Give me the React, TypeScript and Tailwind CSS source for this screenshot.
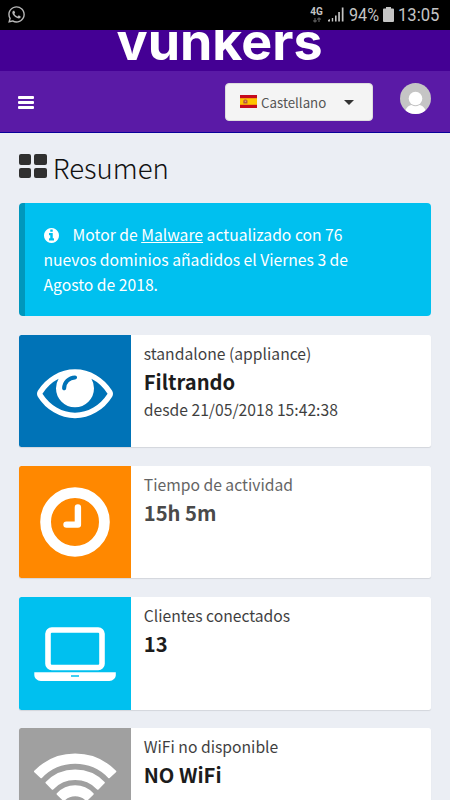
import type { ReactNode } from "react";
import { FaWhatsapp } from "react-icons/fa";
import { clsx } from "clsx";

interface InfoBox {
  label: string;
  value: string;
  detail?: string;
  color: string;
  muted?: boolean;
  icon: ReactNode;
}

function EyeIcon() {
  return (
    <svg viewBox="0 0 1792 1792" className="h-[76px] w-[76px]" fill="currentColor">
      <path d="M1664 960q-152-236-381-353 61 104 61 225 0 185-131.500 316.500t-316.500 131.500-316.500-131.500-131.500-316.500q0-121 61-225-229 117-381 353 133 205 333.500 326.500t434.500 121.500 434.500-121.500 333.500-326.500zm-720-384q0-20-14-34t-34-14q-125 0-214.500 89.500t-89.500 214.500q0 20 14 34t34 14 34-14 14-34q0-86 61-147t147-61q20 0 34-14t14-34zm848 384q0 34-20 69-140 230-376.500 368.500t-499.500 138.500-499.500-139-376.500-368q-20-35-20-69t20-69q140-229 376.500-368t499.500-139 499.500 139 376.500 368q20 35 20 69z" />
    </svg>
  );
}

function ClockIcon() {
  return (
    <svg viewBox="0 0 112 112" className="h-[112px] w-[112px]" fill="none" stroke="currentColor">
      <circle cx="56" cy="56" r="29.4" strokeWidth="10.8" />
      <path d="M58.900 41.500V58.600H47.500" strokeWidth="6.400" strokeLinecap="round" strokeLinejoin="round" />
    </svg>
  );
}

function LaptopIcon() {
  return (
    <svg viewBox="0 0 112 112" className="h-[112px] w-[112px]" fill="none" stroke="currentColor">
      <rect x="29" y="33" width="54" height="37.500" rx="3.800" strokeWidth="5.600" />
      <path
        d="M15.300 75.300h81.500v2.700c0 3-2.800 5.900-6.500 5.900H21.800c-3.700 0-6.500-2.900-6.500-5.900z"
        fill="currentColor"
        stroke="none"
      />
      <path d="M52 79h8" stroke="#00c0ef" strokeWidth="1.600" />
    </svg>
  );
}

function WifiIcon() {
  return (
    <svg viewBox="0 0 112 112" className="h-[112px] w-[112px]" fill="none" stroke="currentColor" strokeLinejoin="round">
      <g fill="currentColor" strokeWidth="2">
        <path d="M16 42.500A56 56 0 0 1 96.300 42.500L90 48.200A47 47 0 0 0 22.200 48.200Z" />
        <path d="M27.400 53.600A40 40 0 0 1 84.900 53.600L78.800 59.700A31.500 31.500 0 0 0 33.500 59.700Z" />
        <path d="M38.600 65A24 24 0 0 1 73.700 65L67.500 71A16 16 0 0 0 44.800 71Z" />
        <path d="M49.500 76.500a9.300 9.300 0 0 1 13.200 0L56.100 83z" />
      </g>
    </svg>
  );
}

const BOXES: InfoBox[] = [
  {
    label: "standalone (appliance)",
    value: "Filtrando",
    detail: "desde 21/05/2018 15:42:38",
    color: "bg-[#0073b7]",
    icon: <EyeIcon />,
  },
  { label: "Tiempo de actividad", value: "15h 5m", color: "bg-[#ff8800]", muted: true, icon: <ClockIcon /> },
  { label: "Clientes conectados", value: "13", color: "bg-[#00c0ef]", icon: <LaptopIcon /> },
  { label: "WiFi no disponible", value: "NO WiFi", color: "bg-[#a0a0a0]", icon: <WifiIcon /> },
];

function StatusBar() {
  return (
    <div className="flex h-[29.500px] shrink-0 items-center bg-black pl-[7px] font-[Roboto] text-[#c4c4c4]">
      <FaWhatsapp size={19} className="-mt-[1px] text-[#b8b8b8]" />
      <div className="ml-auto flex h-full w-[140px] items-center">
        <div className="flex w-[13px] shrink-0 flex-col items-center">
          <span className="text-[10px] leading-[10px] font-bold">4G</span>
          <svg viewBox="0 0 10 6" className="h-[6px] w-[10px]" fill="none" stroke="#555" strokeWidth="1.300">
            <path d="M3 1v4M1.300 3.500 3 5l1.700-1.500M7 5V1M5.300 2.500 7 1l1.700 1.500" />
          </svg>
        </div>
        <svg viewBox="0 0 16 15" className="ml-[5px] h-[15px] w-[16px] shrink-0" fill="currentColor">
          <path d="M0 14.500V13l2-1v2.500zM3.800 14.500V11h1.400v3.500zM7 14.500V8.500h1.600v6zM10.200 14.500V5h1.700v9.500zM13.800 14.500V.5h1.700v14z" />
        </svg>
        <div className="ml-[5px] w-[30px] shrink-0 origin-left scale-x-[0.865] pt-px text-[18.700px] leading-5">94%</div>
        <svg viewBox="0 0 11 15" className="ml-[4px] h-[15px] w-[11px] shrink-0" fill="currentColor">
          <path d="M3 0h5v1.500h2q1 0 1 1V14q0 1-1 1H1q-1 0-1-1V2.500q0-1 1-1h2z" />
        </svg>
        <div className="ml-[4px] w-[42px] shrink-0 origin-left scale-x-[0.890] pt-px text-[18.700px] leading-5">13:05</div>
      </div>
    </div>
  );
}

function SpanishFlag() {
  return (
    <svg viewBox="0 0 18 13" className="h-[13px] w-[17px]" preserveAspectRatio="none">
      <path fill="#c60b1e" d="M0 0h18v13H0z" />
      <path fill="#ffc400" d="M0 3.200h18v6.600H0z" />
      <path fill="#b5533c" d="M3.500 5.300h1v-.8h2.400v.8h1v3.300H3.500z" />
      <path fill="#e0a070" d="M5 5.600h1.500v1.500H5z" />
    </svg>
  );
}

function Header() {
  return (
    <header className="shrink-0">
      <div className="flex h-[41px] items-start justify-center overflow-hidden bg-[#440094] pr-[11px]">
        <span className="-mt-[18px] origin-center scale-x-[1.025] font-[Inter] text-[50.700px] leading-[60px] font-bold whitespace-nowrap text-white">
          vunkers
        </span>
      </div>
      <nav className="flex h-[62.500px] items-start border-b border-[#08009a] bg-[#5a1aa6] pr-[19px] pl-[18px]">
        <button type="button" aria-label="Menú" className="mt-[25px] flex w-4 flex-col gap-[2px]">
          <span className="h-[3px] rounded-[1px] bg-white" />
          <span className="h-[3px] rounded-[1px] bg-white" />
          <span className="h-[3px] rounded-[1px] bg-white" />
        </button>
        <button
          type="button"
          className="mt-[12px] ml-auto flex h-[38.500px] w-[148px] items-center rounded-[4px] border border-[#ddd] bg-[#f4f4f4] pl-[14px] text-[#555]"
        >
          <SpanishFlag />
          <span className="mt-[2px] ml-[4px] text-[13.300px] leading-5">Castellano</span>
          <span className="mt-px ml-[18px] h-0 w-0 border-x-[5px] border-t-[5px] border-x-transparent border-t-[#333]" />
        </button>
        <svg viewBox="0 0 31 31" className="mt-[12.500px] ml-[27px] h-[31px] w-[31px]">
          <clipPath id="avatar">
            <circle cx="15.500" cy="15.500" r="15.500" />
          </clipPath>
          <g clipPath="url(#avatar)">
            <path fill="#c5c5c5" d="M0 0h31v31H0z" />
            <circle cx="15.500" cy="15.500" r="6.800" fill="#fff" />
            <path fill="#fff" d="M5 28c1.500-4 4.500-6 6.500-6q4 2.500 8 0c2 0 5 2 6.500 6v4H5z" />
          </g>
        </svg>
      </nav>
    </header>
  );
}

function Callout() {
  return (
    <div className="mt-[17.500px] h-[112.500px] rounded-[4px] border-l-[6.250px] border-[#0097bc] bg-[#00c0ef] pt-[19px] pl-[18.750px] text-[15.700px] leading-[25px] text-white">
      <svg viewBox="128 128 1536 1536" className="mr-[14px] inline-block h-[15px] w-[15px] align-[-1.500px]" fill="currentColor">
        <path d="M1152 1376v-160q0-14-9-23t-23-9h-96v-512q0-14-9-23t-23-9h-320q-14 0-23 9t-9 23v160q0 14 9 23t23 9h96v320h-96q-14 0-23 9t-9 23v160q0 14 9 23t23 9h448q14 0 23-9t9-23zm-128-896v-160q0-14-9-23t-23-9h-192q-14 0-23 9t-9 23v160q0 14 9 23t23 9h192q14 0 23-9t9-23zm640 416q0 209-103 385.500t-279.500 279.500-385.500 103-385.500-103-279.500-279.500-103-385.500 103-385.500 279.500-279.500 385.500-103 385.500 103 279.500 279.500 103 385.500z" />
      </svg>
      Motor de <span className="underline">Malware</span> actualizado con 76
      <br />
      nuevos dominios añadidos el Viernes 3 de
      <br />
      Agosto de 2018.
    </div>
  );
}

export default function App() {
  return (
    <div className="flex h-[800px] w-[450px] flex-col overflow-hidden bg-[#ebeef4] font-['Noto_Sans_CJK_SC','Noto_Sans',sans-serif]">
      <StatusBar />
      <Header />
      <main className="px-[18.750px] pt-[16.900px]">
        <h1 className="flex h-[36px] items-center text-[27.600px] leading-[36px] font-light text-[#111]">
          <span className="-mt-[3px] mr-[6px] grid h-[24px] w-[28px] grid-cols-2 gap-[3px]">
            {[0, 1, 2, 3].map((i) => (
              <span key={i} className="rounded-[2px] bg-[#303030]" />
            ))}
          </span>
          <span className="-mt-[2px]">Resumen</span>
        </h1>
        <Callout />
        <div className="mt-[18.750px] flex flex-col gap-[18.750px]">
          {BOXES.map((box) => (
            <section
              key={box.label}
              className="flex h-[112.500px] overflow-hidden rounded-[2.500px] bg-white shadow-[0_1px_1px_rgba(0,0,0,0.1)]"
            >
              <div className={clsx("flex w-[112.500px] shrink-0 items-center justify-center text-white", box.color)}>
                {box.icon}
              </div>
              <div className={clsx("pt-[6px] pl-[12.500px]", box.muted ? "text-[#4a4a4a]" : "text-[#1c1c1c]")}>
                <p className="text-[15.700px] leading-[25px] opacity-85">{box.label}</p>
                <p className="text-[20.200px] leading-[32px] font-bold">{box.value}</p>
                {box.detail && <p className="-mt-px text-[15.700px] leading-[25px] opacity-85">{box.detail}</p>}
              </div>
            </section>
          ))}
        </div>
      </main>
    </div>
  );
}
